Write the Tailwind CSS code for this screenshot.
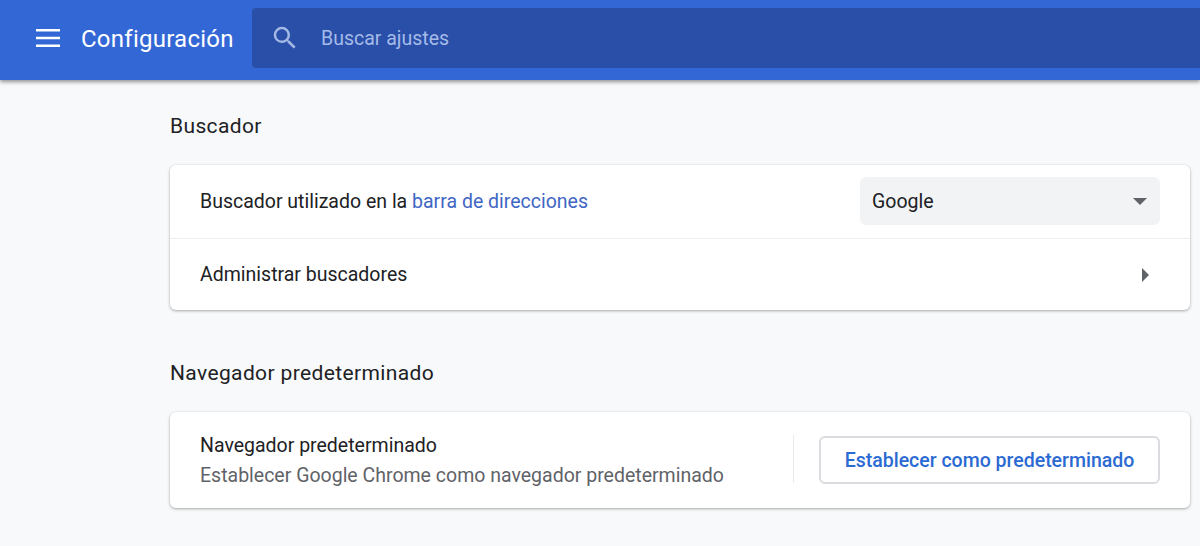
<!DOCTYPE html>
<html lang="es">
<head>
<meta charset="utf-8">
<title>Configuración</title>
<script src="https://cdn.jsdelivr.net/npm/@tailwindcss/browser@4"></script>
</head>
<body class="bg-[#f8f9fa] font-['Roboto',sans-serif] text-[#202124] h-[546px] w-[1200px] overflow-hidden">
<header class="relative z-10 h-[80px] pb-[4px] bg-[#3367d6] flex items-center shadow-[0_2px_4px_rgba(0,0,0,0.42)]">
  <div class="w-[252px] shrink-0 flex items-center pl-[36px] gap-[21px]">
    <svg width="24" height="18" viewBox="0 0 24 18" class="block"><path fill="#fff" d="M0 0h24v2.600H0zM0 7.700h24v2.600H0zM0 15.400h24v2.600H0z"/></svg>
    <span class="text-[24px] leading-[32px] pt-[2px] text-white tracking-[0.25px]">Configuración</span>
  </div>
  <div class="flex-1 h-[60px] bg-[#2a4fa8] rounded-l-[4px] flex items-center pl-[18px] gap-[21px]">
    <svg width="30" height="30" viewBox="0 0 24 24" class="block"><path fill="#a5b9e6" d="M15.500 14h-.79l-.28-.27A6.471 6.471 0 0 0 16 9.500 6.500 6.500 0 1 0 9.500 16c1.610 0 3.090-.59 4.230-1.570l.27.28v.79l5 4.990L20.490 19l-4.990-5zm-6 0C7.010 14 5 11.990 5 9.500S7.010 5 9.500 5 14 7.010 14 9.500 11.990 14 9.500 14z"/></svg>
    <span class="text-[19.500px] pt-[2px] text-[#a5bbe9]">Buscar ajustes</span>
  </div>
</header>
<main class="pl-[170px] pr-[10px]">
  <h2 class="mt-[32px] h-[28px] leading-[28px] text-[21px] font-normal tracking-[0.375px]">Buscador</h2>
  <section class="mt-[25px] bg-white rounded-[6px] shadow-[0_1px_3px_rgba(60,64,67,0.45)]">
    <div class="h-[73px] flex items-center justify-between pl-[30px] pr-[30px] border-b border-[#eceef0] box-content">
      <span class="text-[19.500px]">Buscador utilizado en la <span class="text-[#3f66c4]">barra de direcciones</span></span>
      <div class="w-[300px] h-[48px] mb-[1px] bg-[#f1f3f4] rounded-[6px] flex items-center justify-between pl-[12px] pr-[13px]">
        <span class="text-[19.500px] pt-[2px]">Google</span>
        <svg width="14" height="7" viewBox="0 0 14 7" class="block"><path fill="#5f6368" d="M0 0h14L7 7z"/></svg>
      </div>
    </div>
    <div class="h-[71px] flex items-center justify-between pl-[30px] pr-[41px]">
      <span class="text-[19.500px]">Administrar buscadores</span>
      <svg width="7" height="14" viewBox="0 0 7 14" class="block"><path fill="#5f6368" d="M0 0l7 7-7 7z"/></svg>
    </div>
  </section>
  <h2 class="mt-[49px] h-[28px] leading-[28px] text-[21px] font-normal tracking-[0.375px]">Navegador predeterminado</h2>
  <section class="mt-[25px] h-[96px] bg-white rounded-[6px] shadow-[0_1px_3px_rgba(60,64,67,0.45)] flex items-center pl-[30px] pr-[30px]">
    <div class="flex-1 pt-[2px]">
      <div class="text-[19.500px] leading-[30px]">Navegador predeterminado</div>
      <div class="text-[19.500px] leading-[30px] text-[#5f6368]">Establecer Google Chrome como navegador predeterminado</div>
    </div>
    <div class="w-px h-[48px] mb-[2px] bg-[#e8eaed] mr-[25px]"></div>
    <button class="w-[341px] h-[48px] pt-[2px] bg-white border-2 border-[#dadce0] rounded-[6px] text-[19.500px] font-medium text-[#2b6ad2]">Establecer como predeterminado</button>
  </section>
</main>
</body>
</html>
